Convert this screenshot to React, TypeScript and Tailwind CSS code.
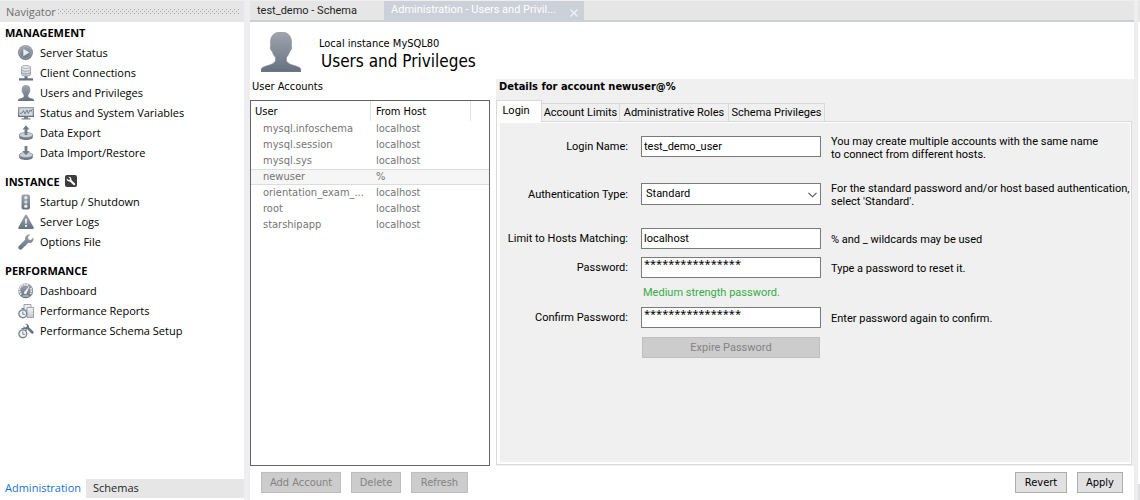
import { useState, type ReactNode } from "react";

const ui = "font-['DejaVu_Sans_Condensed','DejaVu_Sans',sans-serif]";
const nav = "font-['Open_Sans',sans-serif]";
const form = "font-[Roboto,sans-serif]";

function Defs() {
  return (
    <svg className="absolute h-0 w-0" aria-hidden="true">
      <defs>
        <linearGradient id="steel" x1="0" y1="0" x2="0" y2="1">
          <stop offset="0" stopColor="#a0a5af" />
          <stop offset="1" stopColor="#65717f" />
        </linearGradient>
        <linearGradient id="pale" x1="0" y1="0" x2="0" y2="1">
          <stop offset="0" stopColor="#f4f5f7" />
          <stop offset="1" stopColor="#c3c8cf" />
        </linearGradient>
      </defs>
    </svg>
  );
}

function Icon({ children }: { children: ReactNode }) {
  return (
    <svg viewBox="0 0 16 16" className="h-4 w-4 shrink-0" aria-hidden="true">
      {children}
    </svg>
  );
}

const wrench =
  "M15.3 3.6 12.9 6 10.6 5.4 10 3.1 12.4.7C10.7.1 8.8.6 7.8 2c-.8 1.1-.9 2.4-.5 3.5L.9 11.9c-.9.9-.9 2.2 0 3.1s2.2.9 3.1 0L10.4 8.7c1.2.5 2.5.3 3.5-.4 1.5-1.1 2.1-3.1 1.4-4.7Z";

const StatusIcon = (
  <Icon>
    <circle cx="7.5" cy="7.5" r="7.5" fill="url(#steel)" />
    <circle cx="7.5" cy="7.5" r="5.8" fill="none" stroke="#b3b9c2" strokeWidth=".6" />
    <path d="M5.3 3.7 11.3 7.5 5.3 11.3Z" fill="#e8ebef" />
  </Icon>
);
const ClientsIcon = (
  <Icon>
    <path d="M6.5 11h3v2.2H15v2.300H1v-2.300h5.500Z" fill="#65717f" />
    <path d="M3.500 2v7.400c0 1 2 1.700 4.500 1.700s4.500-.7 4.500-1.700V2Z" fill="url(#pale)" stroke="#9aa1ac" strokeWidth=".9" />
    <ellipse cx="8" cy="2" rx="4.500" ry="1.500" fill="#eceef1" stroke="#a2a8b2" strokeWidth=".9" />
    <path d="M3.500 4.600c0 1 2 1.600 4.500 1.600s4.500-.6 4.500-1.600M3.500 7.200c0 1 2 1.600 4.500 1.600s4.500-.6 4.500-1.600" fill="none" stroke="#959ca8" strokeWidth=".9" />
  </Icon>
);
const personPath =
  "M20 0c-6 0-10 3-10.500 9 0 2-.2 3.500.2 5-1 1-.2 4.500 1.300 5 .7 2.600 2 4.700 3.500 6.500v3.500c-1 2-3.500 3.300-7 4.200C3 34.400 0 35.600 0 38v2h40v-2c0-2.400-3-3.600-7.500-4.800-3.500-.9-6-2.200-7-4.200v-3.500c1.500-1.800 2.800-3.900 3.500-6.500 1.500-.5 2.300-4 1.300-5 .4-1.500.2-3 .2-5C30 3 26 0 20 0Z";
const UserIcon = (
  <svg viewBox="0 0 40 40" className="h-4 w-4 shrink-0" aria-hidden="true">
    <path d={personPath} fill="url(#steel)" />
  </svg>
);
const VariablesIcon = (
  <Icon>
    <path d="M0 2h16v10H0Z" fill="url(#steel)" />
    <path d="M1.300 3.300h13.400v7.400H1.300Z" fill="#d3d8de" />
    <path d="M2 8.500 4 8 5.500 5.500 7 9 9 5 10.300 8.500 12 5 13 6.500 14 4.500" fill="none" stroke="#6b7583" strokeWidth=".9" />
    <path d="M6 12h4v1.200h2.500v1.300h-9v-1.300H6Z" fill="#7b8592" />
  </Icon>
);
const disk = (
  <>
    <path d="M1.200 10v2.500c0 1.500 3 2.500 6.800 2.500s6.800-1 6.800-2.500V10Z" fill="#707b88" />
    <ellipse cx="8" cy="10" rx="6.800" ry="2.600" fill="#cbd0d7" stroke="#868f9b" strokeWidth=".8" />
  </>
);
const ExportIcon = (
  <Icon>
    {disk}
    <path d="M8 .3 11.500 4.500H9.400V10H6.600V4.500H4.500Z" fill="#727d8a" />
  </Icon>
);
const ImportIcon = (
  <Icon>
    {disk}
    <path d="M6.600 1h2.800v5h2.300L8 10.300 4.300 6h2.300Z" fill="#727d8a" />
  </Icon>
);
const StartupIcon = (
  <Icon>
    <rect x="3.500" y=".5" width="8.500" height="15" rx="2" fill="url(#steel)" />
    <circle cx="7.800" cy="3.700" r="1.700" fill="#e6e9ed" />
    <circle cx="7.800" cy="8" r="1.700" fill="#d3d8de" />
    <circle cx="7.800" cy="12.300" r="1.700" fill="#e6e9ed" />
  </Icon>
);
const LogsIcon = (
  <Icon>
    <path d="M7 1.200c.4-.8 1.600-.8 2 0l6.700 12.300c.3.700 0 1.500-.9 1.500H1.200c-.9 0-1.200-.8-.9-1.500Z" fill="url(#steel)" />
    <path d="M7 4.800h2l-.3 5H7.300Z" fill="#f0f2f5" />
    <circle cx="8" cy="11.900" r="1.100" fill="#f0f2f5" />
  </Icon>
);
const OptionsIcon = (
  <Icon>
    <path d={wrench} fill="url(#steel)" />
  </Icon>
);
const DashboardIcon = (
  <Icon>
    <circle cx="7.700" cy="7.700" r="7.500" fill="url(#steel)" />
    <path d="M3.300 11.500A5.500 5.500 0 0 1 10.500 3" fill="none" stroke="#e3e7eb" strokeWidth="2" strokeDasharray="1.800 .6" />
    <path d="M12.600 5A5.500 5.500 0 0 1 12.300 11" fill="none" stroke="#e3e7eb" strokeWidth="1.800" strokeDasharray="1.800 .6" />
    <path d="M11.600 2.800 8.900 9.500a1.500 1.500 0 1 1-2-1.200Z" fill="#f4f5f7" />
    <path d="M4.700 13h6" stroke="#d9dde2" strokeWidth="1" />
  </Icon>
);
const watch = (
  <>
    <circle cx="4.800" cy="10.800" r="3.900" fill="#f3f4f6" stroke="#79838f" strokeWidth="1.400" />
    <path d="M3.400 5.500h2.800M4.800 5.500v1.500M7.700 6.700l1 1M4.800 8.500v2.500l2 .4" fill="none" stroke="#79838f" strokeWidth="1.100" />
  </>
);
const ReportsIcon = (
  <Icon>
    <path d="M6 1.500h7v9H6Z" fill="#eceef1" stroke="#949ba6" strokeWidth=".9" />
    <path d="M9 4.500h6.500v10H9Z" fill="url(#pale)" stroke="#949ba6" strokeWidth=".9" />
    {watch}
  </Icon>
);
const SetupIcon = (
  <Icon>
    {watch}
    <path d="M7.200.8 9 2.600 8.500 4 7 4.500 5.500 3C5.200 4.500 6 6 7.400 6.400c.7.2 1.300.1 1.900-.1l3.900 4c1.500 1.300 3.300-.4 2-2L11 4.500C11.400 2.300 9.500.3 7.200.8Z" fill="#66717f" />
  </Icon>
);

const sections: { title: string; badge?: boolean; items: [string, ReactNode][] }[] = [
  {
    title: "MANAGEMENT",
    items: [
      ["Server Status", StatusIcon],
      ["Client Connections", ClientsIcon],
      ["Users and Privileges", UserIcon],
      ["Status and System Variables", VariablesIcon],
      ["Data Export", ExportIcon],
      ["Data Import/Restore", ImportIcon],
    ],
  },
  {
    title: "INSTANCE",
    badge: true,
    items: [
      ["Startup / Shutdown", StartupIcon],
      ["Server Logs", LogsIcon],
      ["Options File", OptionsIcon],
    ],
  },
  {
    title: "PERFORMANCE",
    items: [
      ["Dashboard", DashboardIcon],
      ["Performance Reports", ReportsIcon],
      ["Performance Schema Setup", SetupIcon],
    ],
  },
];

function Navigator() {
  return (
    <nav className={`${nav} flex w-[244px] shrink-0 flex-col bg-white text-[11px] leading-5 text-black`}>
      <div className="flex h-[21px] items-center gap-px bg-[#e6e6e6] pr-[5px] pl-1.5 text-[#6e6e6e]">
        <span>Navigator</span>
        <svg className="h-[5px] min-w-0 flex-1" aria-hidden="true">
          <defs>
            <pattern id="grip" width="4" height="4" patternUnits="userSpaceOnUse">
              <path d="M1 0h1v1H1ZM3 2h1v1H3Z" fill="#a3a3a3" />
            </pattern>
          </defs>
          <rect width="100%" height="5" fill="url(#grip)" />
        </svg>
      </div>
      <div className="flex flex-1 flex-col gap-[9px] pt-px">
        {sections.map((section) => (
          <section key={section.title}>
            <h2 className="flex h-5 items-center gap-[5px] pl-[5px] font-bold">
              {section.title}
              {section.badge && (
                <svg viewBox="0 0 12 12" className="mb-0.5 h-3 w-3" aria-hidden="true">
                  <rect width="12" height="12" rx="2" fill="#3d3d3d" />
                  <path d="M3.200 1.800 5 3.500 4.800 4.700 3.500 5 1.700 3.200C1.300 5 2.800 6.800 4.800 6.400L8.500 10c1 .9 2.300-.4 1.500-1.400L6.400 4.900C6.800 3 5.200 1.300 3.200 1.800Z" fill="#fff" />
                </svg>
              )}
            </h2>
            <ul>
              {section.items.map(([label, icon]) => (
                <li key={label}>
                  <a href="#" className="flex h-5 items-center gap-1.5 pl-[18px]">
                    {icon}
                    {label}
                  </a>
                </li>
              ))}
            </ul>
          </section>
        ))}
      </div>
      <div className="mb-0.5 flex h-[19px] bg-[#e6e6e6] leading-[17px]">
        <button className="h-full bg-white px-[5px] pb-0.5 text-[#1874cd]">Administration</button>
        <button className="h-full px-[7px] pb-0.5 text-[#1e1e1e]">Schemas</button>
      </div>
    </nav>
  );
}

function EditorTabs() {
  return (
    <div className="flex h-[21px] border-b-2 border-[#ccd0d9] bg-[#e6e6e6] font-[Roboto,sans-serif] text-[11px]">
      <button className="w-[134px] pt-0.5 pl-[7px] text-left text-[#1e1e1e]">test_demo - Schema</button>
      <div className="flex w-[200px] items-center justify-between bg-[#ccd0d9] pr-1.5 pl-[7px] text-white">
        <button>Administration - Users and Privil...</button>
        <button aria-label="Close tab" className="pt-1">
          <svg viewBox="0 0 8 8" className="h-2 w-2">
            <path d="M.5.5l7 7M7.500.5l-7 7" stroke="#f3f4f6" strokeWidth="1.200" />
          </svg>
        </button>
      </div>
    </div>
  );
}

const accounts: [string, string][] = [
  ["mysql.infoschema", "localhost"],
  ["mysql.session", "localhost"],
  ["mysql.sys", "localhost"],
  ["newuser", "%"],
  ["orientation_exam_...", "localhost"],
  ["root", "localhost"],
  ["starshipapp", "localhost"],
];

function Accounts() {
  return (
    <section className="flex w-60 shrink-0 flex-col">
      <h2 className="h-[21px] pt-px pl-0.5 leading-[13px]">User Accounts</h2>
      <div className="flex-1 border border-[#646464] bg-white">
        <table className="w-full table-fixed border-separate border-spacing-0 text-left">
          <thead>
            <tr className="h-5">
              <th className="h-5 w-[120px] border-r border-[#e0e0e0] p-0 pt-0.5 pl-1 font-normal">User</th>
              <th className="w-[100px] border-r border-[#e0e0e0] p-0 pt-0.5 pl-[5px] font-normal">From Host</th>
              <th className="p-0" aria-label="Spacer" />
            </tr>
          </thead>
          <tbody className="leading-[14px] text-[#757575]">
            {accounts.map(([user, host]) => {
              const line =
                user === "newuser"
                  ? "border-y border-[#dcdcdc] bg-[#f6f6f6] p-0"
                  : "border-y border-transparent p-0";
              return (
                <tr key={user}>
                  <td className={`${line} pl-3 whitespace-nowrap`}>{user}</td>
                  <td className={`${line} pl-[5px]`}>{host}</td>
                  <td className={line} />
                </tr>
              );
            })}
          </tbody>
        </table>
      </div>
    </section>
  );
}

const label = "flex items-center justify-end pt-0.5 pr-[13px] whitespace-nowrap";
const input = "h-[21px] w-full border border-[#7a7a7a] bg-white px-0.5 outline-none";
const plain = `${input} pb-px`;
const secret = `${input} pb-2 font-['Noto_Sans',sans-serif]`;
const hint = "flex items-center pt-0.5 pl-2.5 leading-[13px]";
const note = "-mt-px h-[21px] pl-2.5 leading-[13px] whitespace-nowrap";

function LoginForm() {
  const [name, setName] = useState("test_demo_user");
  const [hosts, setHosts] = useState("localhost");
  const [password, setPassword] = useState("****************");
  const [confirm, setConfirm] = useState("****************");
  return (
    <form className={`${form} grid grid-cols-[141px_180px_1fr] pt-[13px]`}>
      <label htmlFor="name" className={label}>Login Name:</label>
      <input id="name" className={plain} value={name} onChange={(e) => setName(e.target.value)} />
      <div className={note}>
        You may create multiple accounts with the same name
        <br />
        to connect from different hosts.
      </div>

      <div className="col-span-3 h-[26px]" />
      <label htmlFor="auth" className={label}>Authentication Type:</label>
      <div className="relative">
        <select id="auth" className="block h-[22px] w-full appearance-none border border-[#7a7a7a] bg-white pl-1 outline-none">
          <option>Standard</option>
        </select>
        <svg viewBox="0 0 9 6" className="pointer-events-none absolute top-[9px] right-1 h-1.5 w-[9px]" aria-hidden="true">
          <path d="M.5.8l4 4 4-4" fill="none" stroke="#505050" strokeWidth="1.100" />
        </svg>
      </div>
      <div className={note}>
        For the standard password and/or host based authentication,
        <br />
        select 'Standard'.
      </div>

      <div className="col-span-3 h-[23px]" />
      <label htmlFor="hosts" className={label}>Limit to Hosts Matching:</label>
      <input id="hosts" className={plain} value={hosts} onChange={(e) => setHosts(e.target.value)} />
      <div className={hint}>% and _ wildcards may be used</div>

      <div className="col-span-3 h-2" />
      <label htmlFor="password" className={label}>Password:</label>
      <input id="password" autoComplete="off" className={secret} value={password} onChange={(e) => setPassword(e.target.value)} />
      <div className={hint}>Type a password to reset it.</div>

      <p className="col-start-2 flex h-[29px] items-center pt-0.5 pl-0.5 text-[#33ad45]">Medium strength password.</p>

      <label htmlFor="confirm" className={`${label} col-start-1`}>Confirm Password:</label>
      <input id="confirm" autoComplete="off" className={secret} value={confirm} onChange={(e) => setConfirm(e.target.value)} />
      <div className={hint}>Enter password again to confirm.</div>

      <button type="button" disabled className="col-start-2 mx-px mt-[9px] h-[21px] border border-[#bfbfbf] bg-[#cccccc] pt-0.5 text-[#838383]">
        Expire Password
      </button>
    </form>
  );
}

function Details() {
  return (
    <section className="flex min-w-0 flex-1 flex-col bg-[#f0f0f0] pr-0.5 pb-px">
      <h2 className="h-[21px] pt-px pl-[3px] leading-[13px] font-bold">Details for account newuser@%</h2>
      <div className={`${form} flex items-end`} role="tablist">
        <button role="tab" aria-selected="true" className="z-10 -mb-px h-[22px] w-[46px] border border-b-0 border-[#d9d9d9] bg-white pr-1.5">
          Login
        </button>
        {[
          ["Account Limits", "w-[78px]"],
          ["Administrative Roles", "w-[109px]"],
          ["Schema Privileges", "w-[96px]"],
        ].map(([text, width]) => (
          <button key={text} role="tab" aria-selected="false" className={`${width} h-[18px] border-t border-r border-[#d9d9d9] pt-px whitespace-nowrap`}>
            {text}
          </button>
        ))}
      </div>
      <div className="flex-1 border border-[#d9d9d9] bg-white pt-px pr-px pb-0.5 pl-[3px]">
        <div className="h-full bg-[#f0f0f0]">
          <LoginForm />
        </div>
      </div>
    </section>
  );
}

const disabledButton = "h-[21px] border border-[#bfbfbf] bg-[#cccccc] pt-0.5 text-[#838383]";
const activeButton = "h-[21px] border border-[#adadad] bg-[#e1e1e1] pt-0.5 text-black";

export default function App() {
  return (
    <div className="flex min-h-screen bg-[#eeeef0] pt-px">
      <Defs />
      <Navigator />
      <main className={`${ui} ml-1.5 flex min-w-0 flex-1 flex-col bg-white text-[11px] text-black`}>
        <EditorTabs />
        <header className="flex h-[57px] pt-2.5 pl-[11px]">
          <svg viewBox="0 0 40 40" className="h-10 w-10" aria-hidden="true">
            <path d={personPath} fill="url(#steel)" stroke="#7d8691" strokeWidth=".5" />
          </svg>
          <div className="pt-[5px] pl-[18px]">
            <p className="leading-[14px]">Local instance MySQL80</p>
            <h1 className="pl-0.5 text-[17px] leading-[21px]">Users and Privileges</h1>
          </div>
        </header>
        <div className="flex flex-1 gap-1.5">
          <Accounts />
          <Details />
        </div>
        <footer className="flex h-[34px] items-start gap-2.5 pt-1.5 pr-[11px] pl-[11px]">
          <button disabled className={`${disabledButton} w-20`}>Add Account</button>
          <button disabled className={`${disabledButton} w-[50px]`}>Delete</button>
          <button disabled className={`${disabledButton} w-[57px]`}>Refresh</button>
          <button className={`${activeButton} ml-auto w-[52px]`}>Revert</button>
          <button className={`${activeButton} w-[46px]`}>Apply</button>
        </footer>
      </main>
      <div className="ml-1 flex w-0.5 flex-col bg-white">
        <div className="h-[21px] bg-[#e6e6e6]" />
        <div className="mt-auto h-4 bg-[#e0e0e3]" />
      </div>
    </div>
  );
}
